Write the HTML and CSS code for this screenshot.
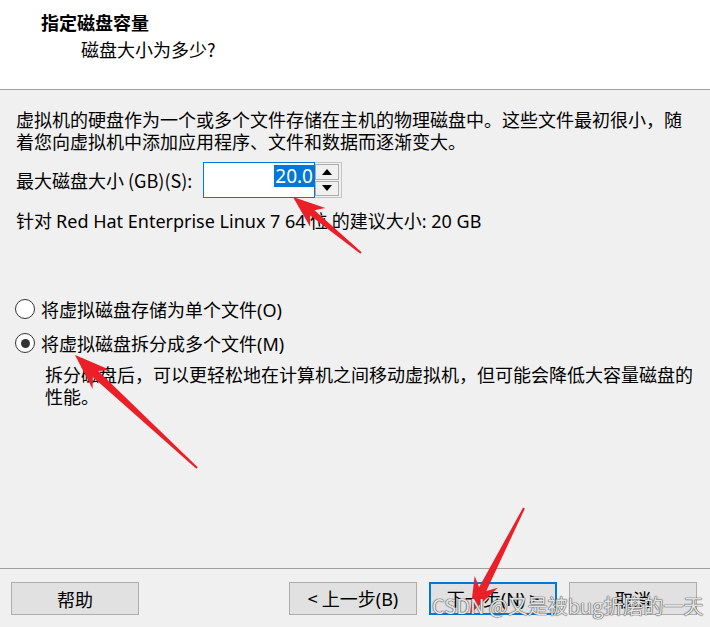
FILE: index.html
```html
<!DOCTYPE html>
<html lang="zh-CN">
<head>
<meta charset="utf-8">
<title>指定磁盘容量</title>
<link rel="stylesheet" href="styles.css">
</head>
<body>
<div class="dialog">
  <header class="head">
    <div class="title">指定磁盘容量</div>
    <div class="subtitle">磁盘大小为多少?</div>
  </header>
  <main class="content">
    <p class="intro">虚拟机的硬盘作为一个或多个文件存储在主机的物理磁盘中。这些文件最初很小，随<br>着您向虚拟机中添加应用程序、文件和数据而逐渐变大。</p>
    <div class="size-row">
      <span class="size-label">最大磁盘大小 (GB)(S):</span>
      <div class="spin">
        <div class="spin-input"><span class="sel">20.0</span></div>
        <div class="spin-btns">
          <div class="spin-btn"><svg width="10" height="6" viewBox="0 0 10 6"><polygon points="5,0 10,6 0,6" fill="#000"/></svg></div>
          <div class="spin-btn"><svg width="10" height="6" viewBox="0 0 10 6"><polygon points="0,0 10,0 5,6" fill="#000"/></svg></div>
        </div>
      </div>
    </div>
    <p class="hint">针对 <span class="latin">Red Hat Enterprise Linux 7 64</span> 位 的建议大小<span class="latin">: 20 GB</span></p>
    <div class="radios">
      <div class="radio-row"><span class="radio"></span><span class="radio-text">将虚拟磁盘存储为单个文件<span class="latin">(O)</span></span></div>
      <div class="radio-row"><span class="radio checked"></span><span class="radio-text">将虚拟磁盘拆分成多个文件<span class="latin">(M)</span></span></div>
      <p class="desc">拆分磁盘后，可以更轻松地在计算机之间移动虚拟机，但可能会降低大容量磁盘的<br>性能。</p>
    </div>
  </main>
  <footer class="foot">
    <button class="btn">帮助</button>
    <div class="foot-right">
      <button class="btn">&lt; 上一步<span class="latin">(B)</span></button>
      <button class="btn primary">下一步<span class="latin">(N)</span> &gt;</button>
      <button class="btn">取消</button>
    </div>
  </footer>

  <svg class="marks" width="710" height="627" viewBox="0 0 710 627">
    <polygon fill="#ea1f27" points="293,197 325.3,208.1 314.5,210.2 361.6,252.2 360.4,253.8 310.1,215.6 310.1,226.7"/>
    <polygon fill="#ea1f27" points="75,355 110.2,370.0 98.2,371.1 197.7,467.3 196.3,468.7 92.8,376.9 92.6,389.0"/>
    <polygon fill="#ea1f27" points="470,614 474.7,576.0 479.1,587.3 523.1,507.5 524.9,508.5 486.3,590.9 497.9,587.8"/>
  </svg>
  <div class="watermark">CSDN @又是被bug折磨的一天</div>
</div>
</body>
</html>
```
FILE: styles.css
```css
* { box-sizing: border-box; }
html, body {
  margin: 0;
  padding: 0;
}
body {
  width: 710px;
  height: 627px;
  overflow: hidden;
  background: #f0f0f0;
  font-family: "Noto Sans CJK SC", "Noto Sans", sans-serif;
  font-size: 18px;
  color: #000;
}
.dialog {
  position: relative;
  width: 710px;
  height: 627px;
}
.head {
  height: 90px;
  background: #fff;
  border-bottom: 1px solid #a0a0a0;
  padding-top: 11px;
}
.title {
  padding-left: 41px;
  font-weight: bold;
  line-height: 22px;
}
.subtitle {
  padding-left: 81px;
  margin-top: 5px;
  line-height: 22px;
}
.content {
  height: 478px;
  padding: 18px 16px 0 16px;
}
.intro {
  margin: 0;
  line-height: 22px;
  white-space: nowrap;
}
.size-row {
  display: flex;
  align-items: center;
  margin-top: 10px;
  height: 36px;
}
.size-label {
  width: 187px;
  line-height: 22px;
  white-space: nowrap;
}
.latin {
  font-family: "Noto Sans", "Noto Sans CJK SC", sans-serif;
}
.spin {
  display: flex;
  height: 36px;
}
.spin-input {
  width: 112px;
  height: 36px;
  background: #fff;
  border: 1px solid #0078d7;
  display: flex;
  justify-content: flex-end;
  align-items: flex-start;
  padding-top: 2px;
}
.sel {
  background: #0078d7;
  color: #fff;
  font-family: "Noto Sans", sans-serif;
  font-size: 19px;
  line-height: 22px;
  padding: 0 1px;
}
.spin-btns {
  width: 27px;
  height: 36px;
  border: 1px solid #c4c4c4;
  border-left: none;
  padding: 1px 2px 1px 0;
  display: flex;
  flex-direction: column;
  gap: 1px;
}
.spin-btn {
  flex: 1;
  background: #f0f0f0;
  border: 1px solid #adadad;
  display: flex;
  align-items: center;
  justify-content: center;
}
.hint {
  margin: 11px 0 0 0;
  line-height: 22px;
  white-space: nowrap;
}
.radios {
  margin-top: 66px;
}
.radio-row {
  display: flex;
  align-items: center;
  height: 22px;
  margin-bottom: 12px;
  margin-left: -1px;
}
.radio {
  width: 20px;
  height: 20px;
  border: 1px solid #333;
  border-radius: 50%;
  background: #fff;
  display: flex;
  align-items: center;
  justify-content: center;
  margin-right: 6px;
  flex: none;
}
.radio.checked::after {
  content: "";
  width: 9px;
  height: 9px;
  border-radius: 50%;
  background: #333;
}
.radio-text {
  line-height: 22px;
  white-space: nowrap;
}
.desc {
  margin: -3px 0 0 29px;
  line-height: 22px;
  white-space: nowrap;
}
.foot {
  height: 59px;
  border-top: 1px solid #a0a0a0;
  padding: 13px 13px 0 11px;
  display: flex;
  align-items: flex-start;
  justify-content: space-between;
}
.foot-right {
  display: flex;
  gap: 12px;
}
.btn {
  width: 128px;
  height: 33px;
  background: #e1e1e1;
  border: 1px solid #adadad;
  font-family: "Noto Sans CJK SC", "Noto Sans", sans-serif;
  font-size: 18px;
  line-height: 22px;
  color: #000;
  padding: 0;
  margin: 0;
}
.btn.primary {
  border: 2px solid #0078d7;
}
.marks {
  position: absolute;
  left: 0;
  top: 0;
  pointer-events: none;
}
.watermark {
  position: absolute;
  left: 432px;
  top: 593px;
  font-family: "Noto Sans CJK SC", "Noto Sans", sans-serif;
  font-size: 20px;
  line-height: 26px;
  color: rgba(255, 255, 255, 0.85);
  white-space: nowrap;
  text-shadow: 0 0 1px #555, 0 0 1px #555, 0 0 1px #555;
  pointer-events: none;
}
```
